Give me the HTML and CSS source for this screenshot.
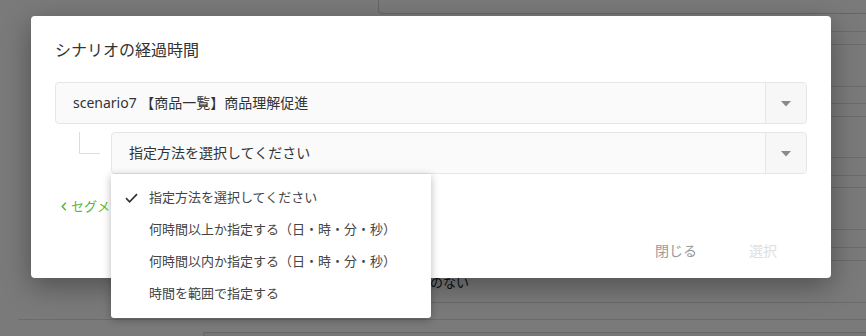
FILE: index.html
```
<!DOCTYPE html>
<html lang="ja">
<head>
<meta charset="utf-8">
<title>シナリオの経過時間</title>
<link rel="stylesheet" href="styles.css">
</head>
<body>
<div class="page">
  <div class="topbar"></div>
  <div class="rows">
    <div class="row r17"></div>
    <div class="row r12"></div>
    <div class="row r41"></div>
    <div class="row r16"></div>
    <div class="row r12"></div>
    <div class="row r40"></div>
    <div class="row r17"></div>
    <div class="row r11"></div>
    <div class="row r41"></div>
    <div class="row r17"></div>
    <div class="row r12"></div>
    <div class="row r41 row-text"><span class="cell-text">のない</span></div>
  </div>
  <div class="footline"></div>
  <div class="lowbox"></div>
</div>

<div class="overlay"></div>

<div class="modal">
  <h2 class="modal-title">シナリオの経過時間</h2>
  <div class="select">
    <div class="select-value">scenario7 【商品一覧】商品理解促進</div>
    <div class="select-arrow"><svg width="10" height="6" viewBox="0 0 10 6"><path d="M0 0H10L5 5.5Z" fill="#8a8a8a"/></svg></div>
  </div>
  <div class="sub-row">
    <div class="connector"></div>
    <div class="select sub-select">
      <div class="select-value">指定方法を選択してください</div>
      <div class="select-arrow"><svg width="10" height="6" viewBox="0 0 10 6"><path d="M0 0H10L5 5.5Z" fill="#8a8a8a"/></svg></div>
    </div>
  </div>
  <a class="back-link"><svg class="chev" width="6" height="9" viewBox="0 0 6 9"><path d="M4.8 0.8L1.2 4.5L4.8 8.2" fill="none" stroke="#5cb531" stroke-width="1.5"/></svg><span class="back-text">セグメ</span></a>
  <div class="footer">
    <button class="btn btn-close">閉じる</button>
    <button class="btn btn-select" disabled>選択</button>
  </div>
</div>

<ul class="menu">
  <li class="menu-item selected"><svg class="check" width="13" height="10" viewBox="0 0 13 10"><path d="M1 5.2L4.6 8.8L12 1.2" fill="none" stroke="#333" stroke-width="1.7"/></svg>指定方法を選択してください</li>
  <li class="menu-item">何時間以上か指定する（日・時・分・秒）</li>
  <li class="menu-item">何時間以内か指定する（日・時・分・秒）</li>
  <li class="menu-item">時間を範囲で指定する</li>
</ul>
</body>
</html>
```

FILE: styles.css
```
* { box-sizing: border-box; }
html, body { margin: 0; padding: 0; }
body {
  width: 866px;
  height: 336px;
  overflow: hidden;
  background: #fff;
  font-family: "Noto Sans", "Noto Sans CJK JP", sans-serif;
  position: relative;
}

/* background page */
.page { width: 866px; height: 336px; }
.topbar {
  margin-left: 378px;
  height: 14px;
  border-left: 1px solid #d6d6d6;
  border-bottom: 1px solid #d6d6d6;
  border-bottom-left-radius: 4px;
  background: #fff;
}
.rows { margin-left: 300px; }
.row { border-bottom: 1px solid #e0e0e0; }
.r11 { height: 12px; }
.r12 { height: 13px; }
.r16 { height: 17px; }
.r17 { height: 18px; }
.r40 { height: 41px; }
.r41 { height: 42px; }
.row-text { display: flex; align-items: center; padding-left: 130px; }
.cell-text { font-size: 13px; color: #222; line-height: 16px; }
.footline {
  margin-left: 18px;
  height: 17px;
  border-bottom: 1px solid #e0e0e0;
}
.lowbox {
  margin-left: 203px;
  margin-top: 12px;
  height: 10px;
  border-top: 1px solid #d8d8d8;
  border-left: 1px solid #d8d8d8;
  background: #f4f4f4;
}

.overlay {
  position: absolute;
  inset: 0;
  background: rgba(0, 0, 0, 0.52);
}

/* modal */
.modal {
  position: absolute;
  left: 31px;
  top: 16px;
  width: 800px;
  height: 262px;
  background: #fff;
  border-radius: 4px;
  box-shadow: 0 8px 28px rgba(0, 0, 0, 0.35);
  padding: 22px 24px 0 24px;
  display: flex;
  flex-direction: column;
}
.modal-title {
  margin: 0;
  font-size: 16px;
  font-weight: normal;
  line-height: 24px;
  color: #333;
}
.select {
  margin-top: 20px;
  height: 42px;
  display: flex;
  border: 1px solid #e6e6e6;
  border-radius: 4px;
  background: #fafafa;
}
.select-value {
  flex: 1;
  display: flex;
  align-items: center;
  padding-left: 17px;
  font-size: 14px;
  color: #333;
  line-height: 20px;
}
.select-arrow {
  width: 41px;
  border-left: 1px solid #e6e6e6;
  background: #f6f7f6;
  display: flex;
  align-items: center;
  justify-content: center;
  border-radius: 0 4px 4px 0;
}
.select-arrow svg { display: block; margin-top: 1px; }
.sub-row {
  display: flex;
  margin-top: 8px;
}
.connector {
  width: 56px;
  height: 21px;
  padding-left: 24px;
}
.connector::before {
  content: "";
  display: block;
  width: 20px;
  height: 21px;
  border-left: 1px solid #dcdcdc;
  border-bottom: 1px solid #dcdcdc;
}
.sub-select { flex: 1; margin-top: 0; }

.back-link {
  margin-top: 22px;
  margin-left: 6px;
  width: 49px;
  overflow: hidden;
  display: flex;
  align-items: center;
  height: 20px;
  font-size: 13px;
  color: #5cb531;
  line-height: 20px;
  white-space: nowrap;
}
.chev { margin-right: 4px; flex: none; }
.back-text { flex: none; }

.footer {
  margin-top: 17px;
  display: flex;
  justify-content: flex-end;
  gap: 20px;
  padding-right: 14px;
}
.btn {
  height: 36px;
  padding: 0 16px;
  border: none;
  background: transparent;
  font-family: "Noto Sans", "Noto Sans CJK JP", sans-serif;
  font-size: 14px;
  line-height: 20px;
}
.btn-close { color: #9a9a9a; }
.btn-select { color: #dedede; }

/* dropdown menu */
.menu {
  position: absolute;
  left: 111px;
  top: 174px;
  width: 320px;
  margin: 0;
  padding: 7px 0 9px;
  list-style: none;
  background: #fff;
  border-radius: 0 0 3px 3px;
  box-shadow: 0 2px 8px rgba(0, 0, 0, 0.28);
}
.menu-item {
  height: 32px;
  display: flex;
  align-items: center;
  padding-left: 38px;
  font-size: 13px;
  line-height: 18px;
  color: #444;
  position: relative;
  white-space: nowrap;
}
.check {
  position: absolute;
  left: 14px;
  top: 12px;
}
```
